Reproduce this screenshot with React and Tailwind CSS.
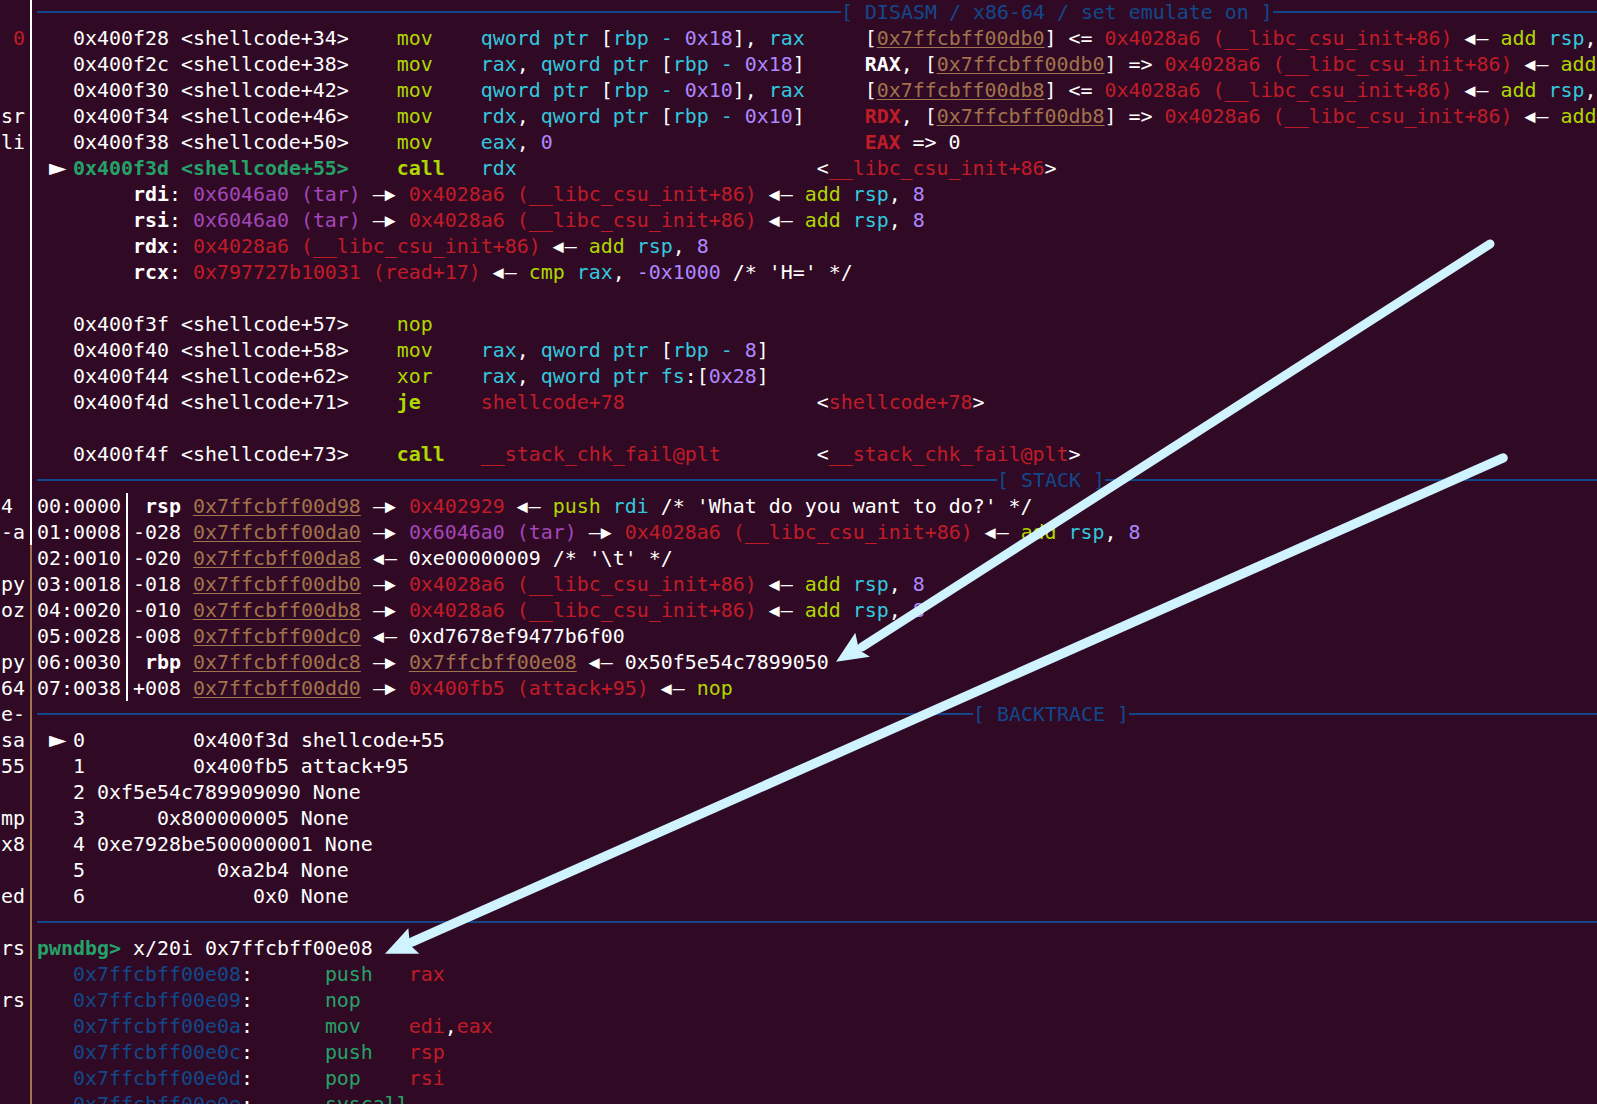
const COLORS = {
  w: "text-white",
  r: "text-[#c01c28]",
  m: "text-[#a347ba]",
  c: "text-[#33c7de]",
  v: "text-[#af87ff]",
  y: "text-[#afd700]",
  g: "text-[#26a269]",
  b: "text-[#12488b]",
  u: "text-[#a2734c] underline underline-offset-[2px] decoration-1",
  W: "text-white font-bold",
  R: "text-[#c01c28] font-bold",
  G: "text-[#26a269] font-bold",
  Y: "text-[#afd700] font-bold",
};

const t = (k, s) => [k, s];
const w = (s) => t("w", s);
const r = (s) => t("r", s);
const m = (s) => t("m", s);
const c = (s) => t("c", s);
const v = (s) => t("v", s);
const y = (s) => t("y", s);
const u = (s) => t("u", s);
const W = (s) => t("W", s);

const addRsp = [y("add"), w(" "), c("rsp"), w(", "), v("8")];
const csu = r("0x4028a6 (__libc_csu_init+86)");
const csuAdd = [csu, w(" ◂— "), ...addRsp];

const ins = (addr, n, op) => [w(`   ${addr} <shellcode+${n}>    `), y(op.padEnd(7, " "))];
const ptr = (off, tail) => [c("qword ptr"), w(" ["), c("rbp"), w(" "), c("-"), w(" "), v(off), w("]"), ...(tail || [])];

const stackRow = (idx, mark, bold, addr, rest) => ({
  stack: [w(idx)],
  tail: [bold ? W(mark) : w(mark), w(" "), u(addr), ...rest],
});

const rows = [
  { header: "[ DISASM / x86-64 / set emulate on ]", left: "w-[804px]" },
  [...ins("0x400f28", 34, "mov"), ...ptr("0x18", [w(", "), c("rax")]), w("     ["), u("0x7ffcbff00db0"), w("] <= "), ...csuAdd],
  [...ins("0x400f2c", 38, "mov"), c("rax"), w(", "), ...ptr("0x18"), w("     "), W("RAX"), w(", ["), u("0x7ffcbff00db0"), w("] => "), ...csuAdd],
  [...ins("0x400f30", 42, "mov"), ...ptr("0x10", [w(", "), c("rax")]), w("     ["), u("0x7ffcbff00db8"), w("] <= "), ...csuAdd],
  [...ins("0x400f34", 46, "mov"), c("rdx"), w(", "), ...ptr("0x10"), w("     "), t("R", "RDX"), w(", ["), u("0x7ffcbff00db8"), w("] => "), ...csuAdd],
  [...ins("0x400f38", 50, "mov"), c("eax"), w(", "), v("0"), w(" ".repeat(26)), t("R", "EAX"), w(" => 0")],
  [w(" ► "), t("G", "0x400f3d <shellcode+55>"), w("    "), t("Y", "call"), w("   "), c("rdx"), w(" ".repeat(25) + "<"), r("__libc_csu_init+86"), w(">")],
  [w("        "), W("rdi"), w(": "), m("0x6046a0 (tar)"), w(" —▸ "), ...csuAdd],
  [w("        "), W("rsi"), w(": "), m("0x6046a0 (tar)"), w(" —▸ "), ...csuAdd],
  [w("        "), W("rdx"), w(": "), ...csuAdd],
  [w("        "), W("rcx"), w(": "), r("0x797727b10031 (read+17)"), w(" ◂— "), y("cmp"), w(" "), c("rax"), w(", "), v("-0x1000"), w(" /* 'H=' */")],
  [],
  [...ins("0x400f3f", 57, "nop")],
  [...ins("0x400f40", 58, "mov"), c("rax"), w(", "), c("qword ptr"), w(" ["), c("rbp"), w(" "), c("-"), w(" "), v("8"), w("]")],
  [...ins("0x400f44", 62, "xor"), c("rax"), w(", "), c("qword ptr fs"), w(":["), v("0x28"), w("]")],
  [w("   0x400f4d <shellcode+71>    "), t("Y", "je"), w("     "), r("shellcode+78"), w(" ".repeat(16) + "<"), r("shellcode+78"), w(">")],
  [],
  [w("   0x400f4f <shellcode+73>    "), t("Y", "call"), w("   "), r("__stack_chk_fail@plt"), w(" ".repeat(8) + "<"), r("__stack_chk_fail@plt"), w(">")],
  { header: "[ STACK ]", left: "w-[960px]" },
  stackRow("00:0000", " rsp", true, "0x7ffcbff00d98", [w(" —▸ "), r("0x402929"), w(" ◂— "), y("push"), w(" "), c("rdi"), w(" /* 'What do you want to do?' */")]),
  stackRow("01:0008", "-028", false, "0x7ffcbff00da0", [w(" —▸ "), m("0x6046a0 (tar)"), w(" —▸ "), ...csuAdd]),
  stackRow("02:0010", "-020", false, "0x7ffcbff00da8", [w(" ◂— 0xe00000009 /* '\\t' */")]),
  stackRow("03:0018", "-018", false, "0x7ffcbff00db0", [w(" —▸ "), ...csuAdd]),
  stackRow("04:0020", "-010", false, "0x7ffcbff00db8", [w(" —▸ "), ...csuAdd]),
  stackRow("05:0028", "-008", false, "0x7ffcbff00dc0", [w(" ◂— 0xd7678ef9477b6f00")]),
  stackRow("06:0030", " rbp", true, "0x7ffcbff00dc8", [w(" —▸ "), u("0x7ffcbff00e08"), w(" ◂— 0x50f5e54c7899050")]),
  stackRow("07:0038", "+008", false, "0x7ffcbff00dd0", [w(" —▸ "), r("0x400fb5 (attack+95)"), w(" ◂— "), y("nop")]),
  { header: "[ BACKTRACE ]", left: "w-[936px]" },
  [w(" ► 0         0x400f3d shellcode+55")],
  [w("   1         0x400fb5 attack+95")],
  [w("   2 0xf5e54c789909090 None")],
  [w("   3      0x800000005 None")],
  [w("   4 0xe7928be500000001 None")],
  [w("   5           0xa2b4 None")],
  [w("   6              0x0 None")],
  { header: null },
  [t("G", "pwndbg>"), w(" x/20i 0x7ffcbff00e08")],
  [t("b", "   0x7ffcbff00e08"), w(":      "), t("g", "push   "), r("rax")],
  [t("b", "   0x7ffcbff00e09"), w(":      "), t("g", "nop")],
  [t("b", "   0x7ffcbff00e0a"), w(":      "), t("g", "mov    "), r("edi"), w(","), r("eax")],
  [t("b", "   0x7ffcbff00e0c"), w(":      "), t("g", "push   "), r("rsp")],
  [t("b", "   0x7ffcbff00e0d"), w(":      "), t("g", "pop    "), r("rsi")],
  [t("b", "   0x7ffcbff00e0e"), w(":      "), t("g", "syscall")],
];

const leftCells = {
  1: [" 0", "text-[#c01c28]"],
  4: ["sr"],
  5: ["li"],
  19: ["4 "],
  20: ["-a"],
  22: ["py"],
  23: ["oz"],
  25: ["py"],
  26: ["64"],
  27: ["e-"],
  28: ["sa"],
  29: ["55"],
  31: ["mp"],
  32: ["x8"],
  34: ["ed"],
  36: ["rs"],
  38: ["rs"],
};

function Glyphs({ text }) {
  return text.split(/(—▸|◂—|►)/).map((part, i) => {
    if (part === "—▸") {
      return (
        <span key={i}>
          —
          <span className="inline-block align-top w-[15px] -ml-[3px] text-[28px] leading-[26px]">▸</span>
        </span>
      );
    }
    if (part === "◂—") {
      return (
        <span key={i}>
          <span className="inline-block align-top w-[15px] -ml-[3px] text-[28px] leading-[26px]">◂</span>—
        </span>
      );
    }
    if (part === "►") {
      return (
        <span key={i} className="inline-block align-top w-[12px] text-[29px] leading-[25px]">
          ►
        </span>
      );
    }
    return part;
  });
}

function Tokens({ items }) {
  return items.map(([k, s], i) => (
    <span key={i} className={COLORS[k]}>
      <Glyphs text={s} />
    </span>
  ));
}

function Row({ row }) {
  if (row.header !== undefined) {
    return (
      <div className="flex items-center h-[26px] leading-[26px] whitespace-pre text-[#12488b]">
        {row.header ? (
          <>
            <div className={`h-[2px] bg-[#12488b] ${row.left}`} />
            <span className="translate-y-px">{row.header}</span>
          </>
        ) : null}
        <div className="h-[2px] bg-[#12488b] flex-1" />
      </div>
    );
  }
  if (row.stack) {
    return (
      <div className="h-[26px] leading-[28px] whitespace-pre">
        <Tokens items={row.stack} />
        <span className="inline-block align-top w-[7px] h-[26px] mr-[5px] border-r-2 border-white" />
        <Tokens items={row.tail} />
      </div>
    );
  }
  return (
    <div className="h-[26px] leading-[28px] whitespace-pre">
      <Tokens items={row} />
    </div>
  );
}

export default function App() {
  return (
    <div className="relative flex h-[1104px] w-[1597px] overflow-hidden bg-[#300a24] text-white text-[19.93px] font-['DejaVu_Sans_Mono',monospace]">
      <div className="w-[25px] pl-px -mt-px shrink-0">
        {rows.map((_, i) => {
          const cell = leftCells[i];
          return (
            <div key={i} className={`h-[26px] leading-[28px] whitespace-pre ${cell && cell[1] ? cell[1] : ""}`}>
              {cell ? cell[0] : ""}
            </div>
          );
        })}
      </div>
      <div className="w-[12px] shrink-0 flex flex-col items-center">
        <div className="w-[2px] h-[545px] bg-white" />
        <div className="w-[2px] flex-1 bg-[#a2734c]" />
      </div>
      <div className="flex-1 min-w-0 -mt-px overflow-hidden">
        {rows.map((row, i) => (
          <Row key={i} row={row} />
        ))}
      </div>
      <svg className="absolute inset-0 pointer-events-none" width="1597" height="1104" viewBox="0 0 1597 1104">
        <line x1="1490" y1="244" x2="862" y2="647" stroke="#cff4ff" strokeWidth="9" strokeLinecap="round" />
        <polygon points="836,661.7 855.3,632.7 859,650 870,656.7" fill="#cff4ff" />
        <line x1="1503" y1="458" x2="412" y2="942" stroke="#cff4ff" strokeWidth="9.5" strokeLinecap="round" />
        <polygon points="385,953.7 408.3,928.3 410,945 419.3,953.7" fill="#cff4ff" />
      </svg>
    </div>
  );
}
